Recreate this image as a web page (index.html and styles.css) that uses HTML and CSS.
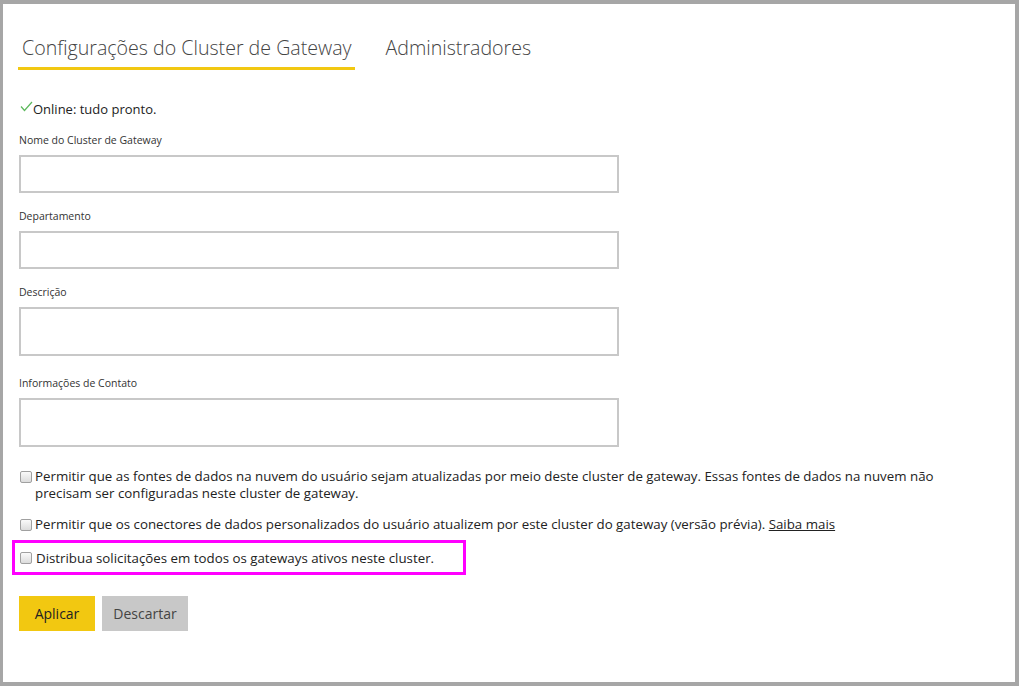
FILE: index.html
```html
<!DOCTYPE html>
<html lang="pt-BR">
<head>
<meta charset="utf-8">
<title>Configurações do Cluster de Gateway</title>
<link rel="stylesheet" href="styles.css">
</head>
<body>
<div class="frame">
  <div class="tabs">
    <div class="tab tab-active">Configurações do Cluster de Gateway</div>
    <div class="tab">Administradores</div>
  </div>

  <div class="status">
    <svg class="check" width="13" height="11" viewBox="0 0 13 11"><polyline points="1,5.5 4.5,9.5 12,1" fill="none" stroke="#5cb85c" stroke-width="1.2"/></svg>
    <span>Online: tudo pronto.</span>
  </div>

  <div class="field field-first">
    <div class="label">Nome do Cluster de Gateway</div>
    <div class="input"></div>
  </div>
  <div class="field">
    <div class="label">Departamento</div>
    <div class="input"></div>
  </div>
  <div class="field">
    <div class="label">Descrição</div>
    <div class="input input-tall"></div>
  </div>
  <div class="field field-contact">
    <div class="label">Informações de Contato</div>
    <div class="input input-tall"></div>
  </div>

  <div class="option option-first">
    <span class="box"></span>
    <span class="option-text">Permitir que as fontes de dados na nuvem do usuário sejam atualizadas por meio deste cluster de gateway. Essas fontes de dados na nuvem não precisam ser configuradas neste cluster de gateway.</span>
  </div>
  <div class="option">
    <span class="box"></span>
    <span class="option-text">Permitir que os conectores de dados personalizados do usuário atualizem por este cluster do gateway (versão prévia). <a class="link" href="#">Saiba mais</a></span>
  </div>
  <div class="highlight">
    <span class="box"></span>
    <span class="highlight-text">Distribua solicitações em todos os gateways ativos neste cluster.</span>
  </div>

  <div class="actions">
    <button class="btn btn-apply">Aplicar</button>
    <button class="btn btn-discard">Descartar</button>
  </div>
</div>
</body>
</html>
```

FILE: styles.css
```css
* { box-sizing: border-box; }
html, body { margin: 0; padding: 0; background: #a6a6a6; }
body { font-family: "Open Sans", "Noto Sans", sans-serif; color: #333; }

.frame {
  width: 1019px;
  height: 686px;
  border: 4px solid #a6a6a6;
  border-left-width: 3px;
  background: #fff;
  padding: 0 0 0 16px;
  overflow: hidden;
}

.tabs {
  display: flex;
  gap: 27px;
  margin-top: 32px;
}
.tab {
  font-size: 19.6px;
  font-weight: 300;
  color: #444;
  padding: 0 3px 0 4px;
  height: 34px;
  line-height: 24px;
}
.tab-active {
  margin-left: -1px;
  border-bottom: 3px solid #f2c811;
}

.status {
  display: flex;
  align-items: center;
  margin-top: 30px;
  font-size: 13px;
  color: #222;
  height: 18px;
}
.check { margin: -6px 0 0 1px; }

.field { margin-top: 16px; }
.field-first { margin-top: 15px; }
.field-contact { margin-top: 20px; }
.label {
  font-size: 10.5px;
  line-height: 14px;
  color: #333;
}
.input {
  width: 600px;
  height: 38px;
  border: 2px solid #c8c8c8;
  margin-top: 8px;
  background: #fff;
}
.input-tall { height: 49px; }

.option {
  display: flex;
  align-items: flex-start;
  font-size: 13.3px;
  line-height: 17px;
  color: #222;
  margin-top: 14px;
  padding-left: 1px;
  max-width: 940px;
}
.option-first { margin-top: 21px; }
.box {
  flex: none;
  width: 12px;
  height: 12px;
  border: 1px solid #a0a0a0;
  border-radius: 2px;
  background: linear-gradient(#fafafa, #dcdcdc);
  margin: 3px 3px 0 0;
}
.link { color: #222; text-decoration: underline; }

.highlight {
  display: flex;
  align-items: center;
  width: 454px;
  height: 35px;
  border: 3px solid #ff00ff;
  margin: 7px 0 0 -7px;
  padding-left: 5px;
  font-size: 13.3px;
  color: #222;
}
.highlight .box { margin: 0 4px 0 0; }

.actions {
  display: flex;
  gap: 7px;
  margin-top: 21px;
}
.btn {
  border: none;
  height: 35px;
  font-family: inherit;
  font-size: 14px;
  color: #222;
  padding: 0;
}
.btn-apply { width: 76px; background: #f2c811; }
.btn-discard { width: 86px; background: #c8c8c8; color: #444; }
```
